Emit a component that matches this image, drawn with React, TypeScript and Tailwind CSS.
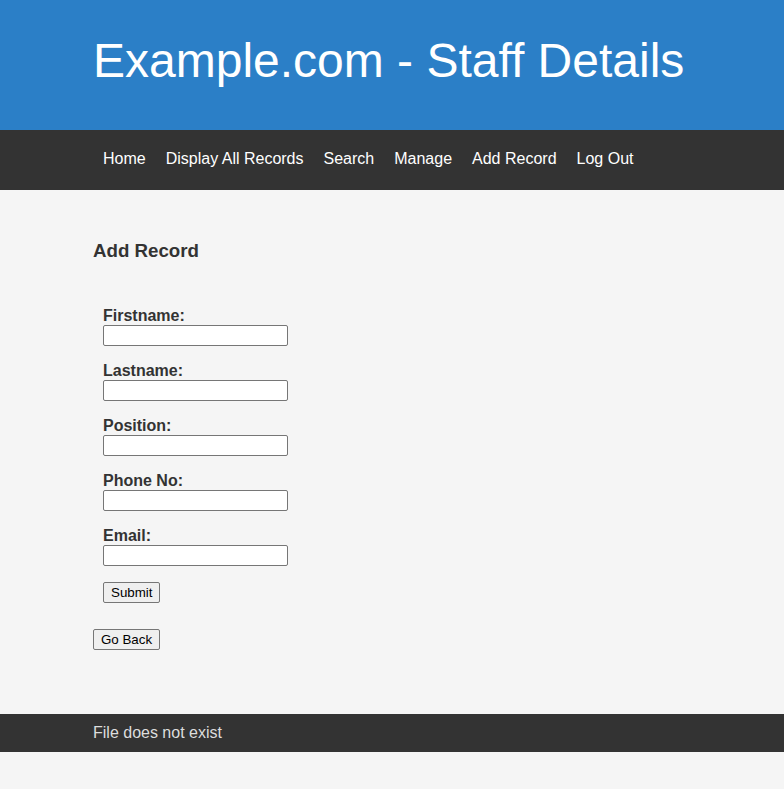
export default function App() {
  const fields = ["Firstname:", "Lastname:", "Position:", "Phone No:", "Email:"];
  const nav = ["Home", "Display All Records", "Search", "Manage", "Add Record", "Log Out"];

  return (
    <div className="min-h-[789px] bg-[#f5f5f5] font-['Liberation_Sans',Arial,sans-serif] text-[#333]">
      {/* header */}
      <header className="h-[130px] bg-[#2b7fc7]">
        <div className="px-[93px] pt-[33px]">
          <h1 className="text-[48px] leading-[56px] text-white">Example.com - Staff Details</h1>
        </div>
      </header>

      {/* nav */}
      <nav className="h-[60px] bg-[#333]">
        <ul className="flex px-[93px] h-full items-center pb-[2px]">
          {nav.map((item) => (
            <li key={item} className="px-[10px] text-[16px] text-white">
              {item}
            </li>
          ))}
        </ul>
      </nav>

      {/* main */}
      <main className="px-[93px] pt-[50px] h-[524px]">
        <h3 className="text-[18.72px] font-bold leading-[22px]">Add Record</h3>
        <form className="pl-[10px] pt-[45px]" onSubmit={(e) => e.preventDefault()}>
          {fields.map((f) => (
            <div key={f} className="mb-[16px]">
              <label className="block text-[16px] font-bold leading-[18px]">{f}</label>
              <input
                type="text"
                className="block w-[185px] h-[21px] bg-white border border-[#767676] rounded-[2px]"
              />
            </div>
          ))}
          <button
            type="submit"
            className="block px-[7px] h-[21px] text-[13.33px] text-black bg-[#efefef] border border-[#767676] rounded-[2px]"
          >
            Submit
          </button>
        </form>
        <button
          type="button"
          className="block mt-[26px] px-[7px] h-[21px] text-[13.33px] text-black bg-[#efefef] border border-[#767676] rounded-[2px]"
        >
          Go Back
        </button>
      </main>

      {/* footer */}
      <footer className="h-[38px] bg-[#333] flex items-center">
        <p className="px-[93px] text-[16px] text-[#ddd]">File does not exist</p>
      </footer>
    </div>
  );
}
